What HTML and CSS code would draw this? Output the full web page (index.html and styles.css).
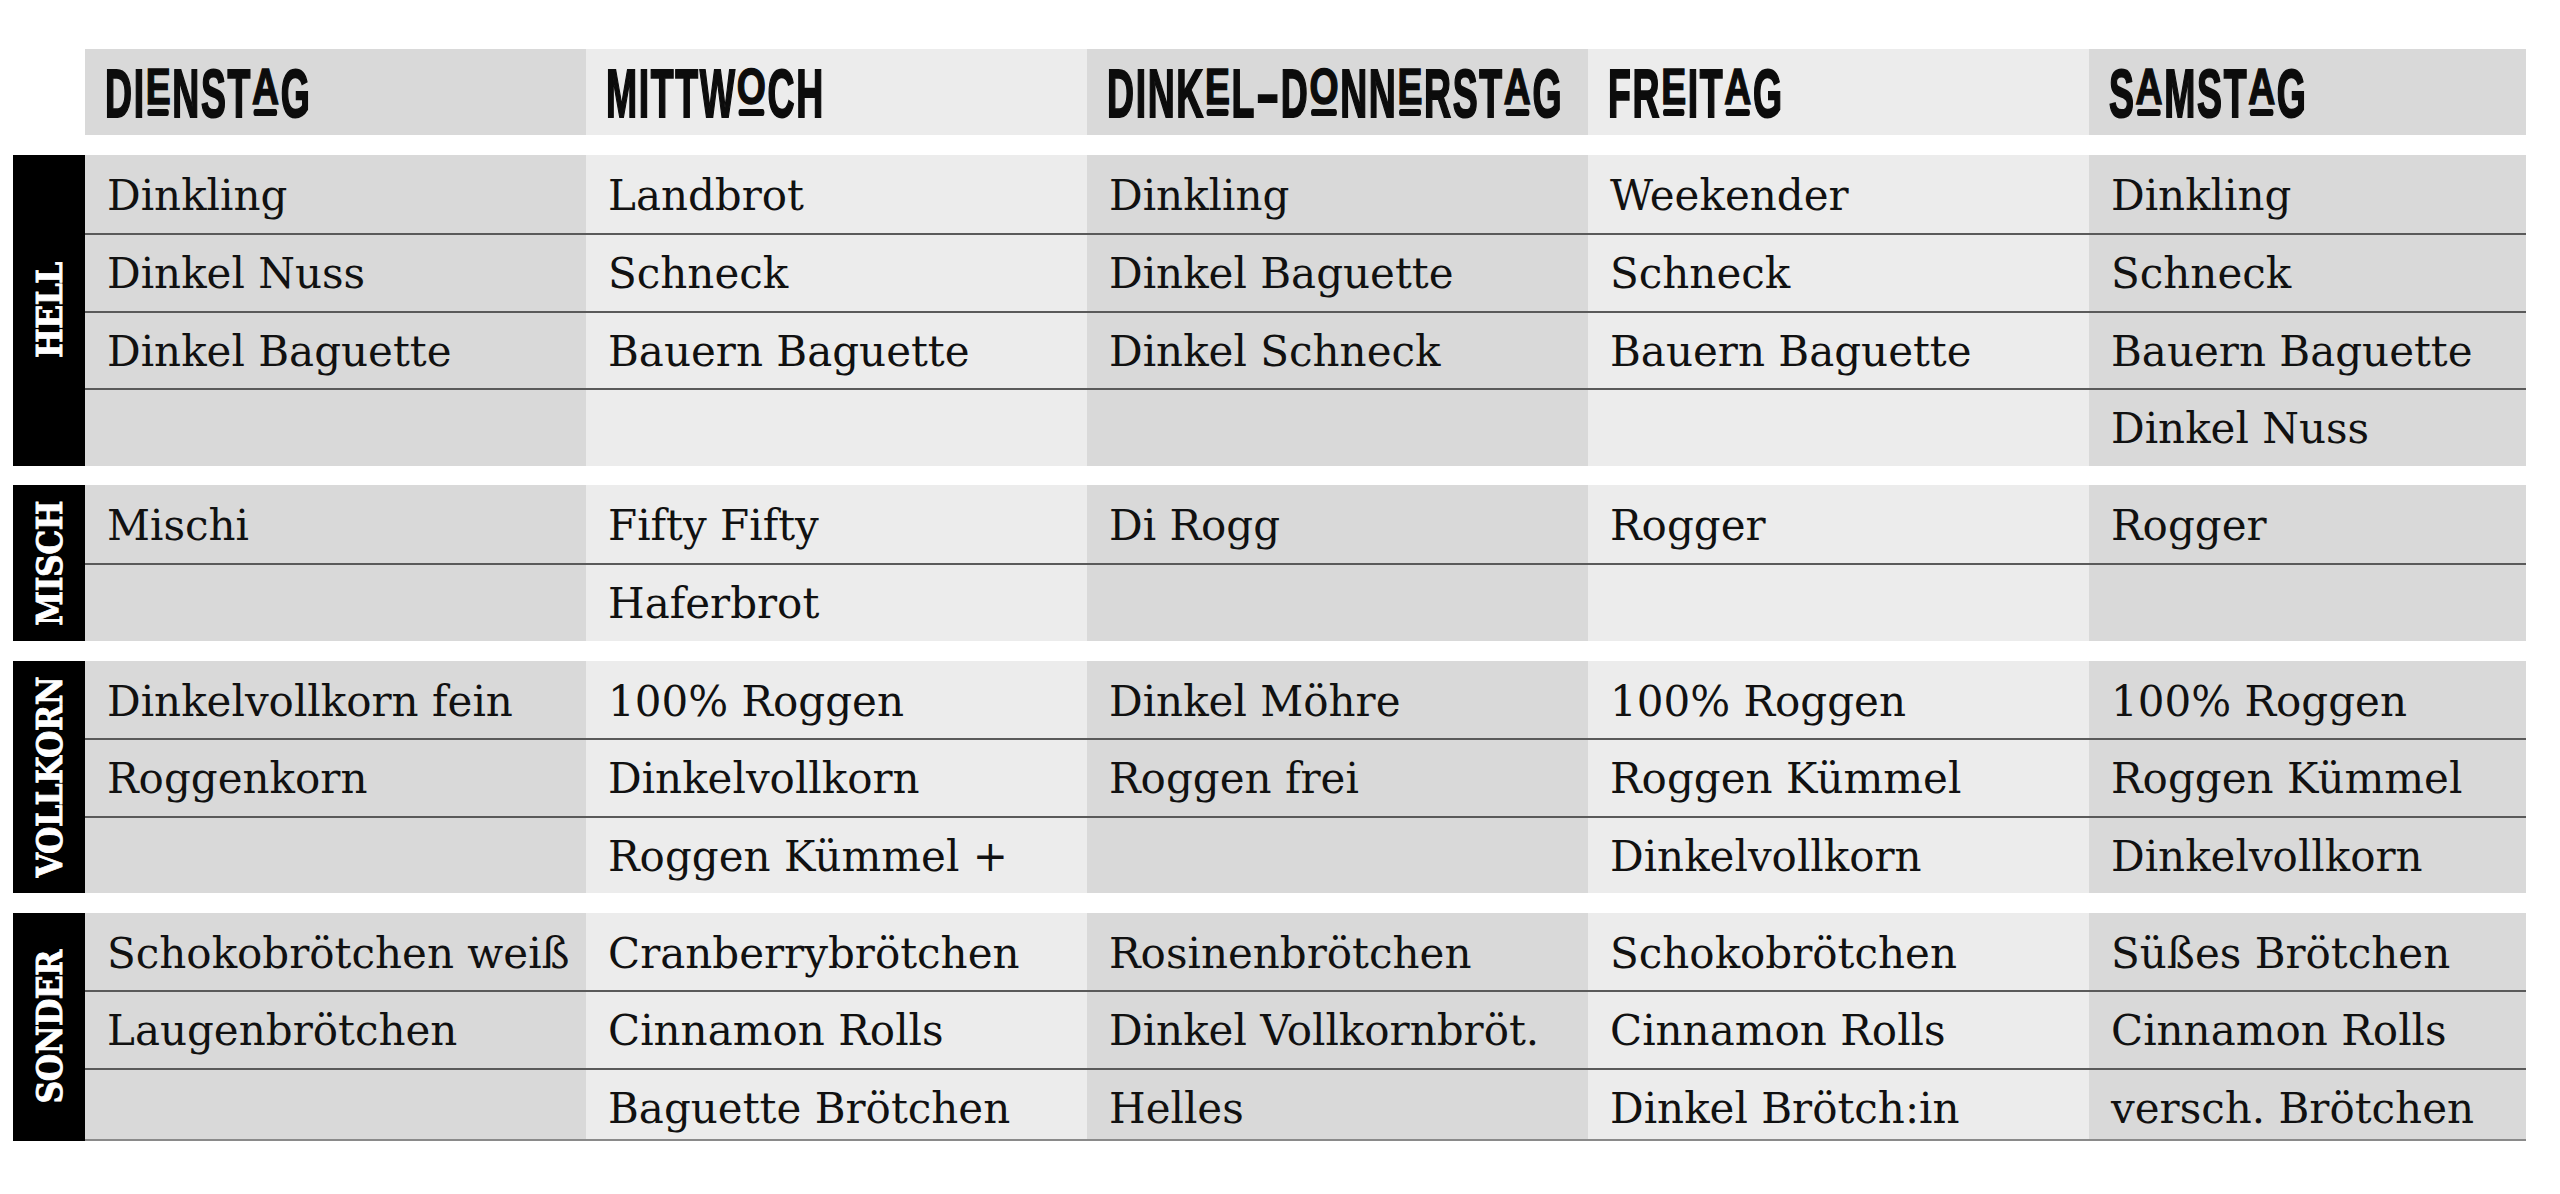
FILE: index.html
```html
<!DOCTYPE html>
<html lang="de">
<head>
<meta charset="utf-8">
<title>Brotplan</title>
<link rel="stylesheet" href="styles.css">
</head>
<body>
<div class="page">
  <div class="head">
    <div class="h"><span class="t">DI<span class="u"><span>E</span></span>NST<span class="u"><span>A</span></span>G</span></div>
    <div class="h"><span class="t">MITTW<span class="u"><span>O</span></span>CH</span></div>
    <div class="h"><span class="t">DINK<span class="u"><span>E</span></span>L<span class="dash">–</span>D<span class="u"><span>O</span></span>NN<span class="u"><span>E</span></span>RST<span class="u"><span>A</span></span>G</span></div>
    <div class="h"><span class="t">FR<span class="u"><span>E</span></span>IT<span class="u"><span>A</span></span>G</span></div>
    <div class="h"><span class="t">S<span class="u"><span>A</span></span>MST<span class="u"><span>A</span></span>G</span></div>
  </div>

  <div class="block hell">
    <div class="label"><span>HELL</span></div>
    <div class="rows">
      <div class="c">Dinkling</div><div class="c">Landbrot</div><div class="c">Dinkling</div><div class="c">Weekender</div><div class="c">Dinkling</div>
      <div class="c">Dinkel Nuss</div><div class="c">Schneck</div><div class="c">Dinkel Baguette</div><div class="c">Schneck</div><div class="c">Schneck</div>
      <div class="c">Dinkel Baguette</div><div class="c">Bauern Baguette</div><div class="c">Dinkel Schneck</div><div class="c">Bauern Baguette</div><div class="c">Bauern Baguette</div>
      <div class="c"></div><div class="c"></div><div class="c"></div><div class="c"></div><div class="c">Dinkel Nuss</div>
    </div>
  </div>

  <div class="block misch">
    <div class="label"><span>MISCH</span></div>
    <div class="rows">
      <div class="c">Mischi</div><div class="c">Fifty Fifty</div><div class="c">Di Rogg</div><div class="c">Rogger</div><div class="c">Rogger</div>
      <div class="c"></div><div class="c">Haferbrot</div><div class="c"></div><div class="c"></div><div class="c"></div>
    </div>
  </div>

  <div class="block voll">
    <div class="label"><span>VOLLKORN</span></div>
    <div class="rows">
      <div class="c">Dinkelvollkorn fein</div><div class="c">100% Roggen</div><div class="c">Dinkel Möhre</div><div class="c">100% Roggen</div><div class="c">100% Roggen</div>
      <div class="c">Roggenkorn</div><div class="c">Dinkelvollkorn</div><div class="c">Roggen frei</div><div class="c">Roggen Kümmel</div><div class="c">Roggen Kümmel</div>
      <div class="c"></div><div class="c">Roggen Kümmel +</div><div class="c"></div><div class="c">Dinkelvollkorn</div><div class="c">Dinkelvollkorn</div>
    </div>
  </div>

  <div class="block sonder">
    <div class="label"><span>SONDER</span></div>
    <div class="rows">
      <div class="c">Schokobrötchen weiß</div><div class="c">Cranberrybrötchen</div><div class="c">Rosinenbrötchen</div><div class="c">Schokobrötchen</div><div class="c">Süßes Brötchen</div>
      <div class="c">Laugenbrötchen</div><div class="c">Cinnamon Rolls</div><div class="c">Dinkel Vollkornbröt.</div><div class="c">Cinnamon Rolls</div><div class="c">Cinnamon Rolls</div>
      <div class="c"></div><div class="c">Baguette Brötchen</div><div class="c">Helles</div><div class="c">Dinkel Brötch:in</div><div class="c">versch. Brötchen</div>
    </div>
  </div>
</div>
</body>
</html>
```

FILE: styles.css
```css
* { box-sizing: border-box; }

html, body {
  margin: 0;
  padding: 0;
  background: #ffffff;
}

.page {
  padding: 49px 0 0 13px;
  width: 2560px;
}

/* header */
.head {
  display: grid;
  grid-template-columns: repeat(4, 501px) 437px;
  height: 86px;
  margin-left: 72px;
  margin-bottom: 20px;
}

.h {
  display: flex;
  align-items: center;
  padding: 1px 0 0 20px;
  overflow: hidden;
  background: #d9d9d9;
}

.h:nth-child(even) { background: #ececec; }

.h .t {
  display: inline-block;
  font-family: "Liberation Sans Narrow", "Liberation Sans", sans-serif;
  font-weight: bold;
  font-size: 68px;
  line-height: 1;
  color: #0c0c0c;
  white-space: nowrap;
  letter-spacing: 3px;
  -webkit-text-stroke: 2px #0c0c0c;
  transform: scaleX(0.55);
  transform-origin: left center;
}

.dash {
  display: inline-block;
  padding: 0 2px;
}

.u {
  display: inline-block;
  position: relative;
}

.u > span {
  display: inline-block;
  transform: scaleY(0.74);
  transform-origin: 50% 0.13em;
}

.u::after {
  content: "";
  position: absolute;
  left: 3px;
  right: 6px;
  bottom: 0.15em;
  height: 0.11em;
  border-radius: 4px;
  background: #0c0c0c;
}

/* blocks */
.block {
  display: flex;
  margin-bottom: 20px;
}

.block.hell { margin-bottom: 19px; }

.label {
  width: 72px;
  flex: none;
  background: #000;
  display: flex;
  align-items: center;
  justify-content: center;
}

.label span {
  writing-mode: vertical-rl;
  transform: rotate(180deg);
  color: #fff;
  font-family: "DejaVu Serif Condensed", "DejaVu Serif", serif;
  font-weight: bold;
  font-size: 35px;
  line-height: 1;
  letter-spacing: -0.5px;
  -webkit-text-stroke: 0.8px #fff;
}

.rows {
  display: grid;
  grid-template-columns: repeat(4, 501px) 437px;
  grid-auto-rows: 77.75px;
}

.misch .rows { grid-auto-rows: 78px; }
.voll .rows { grid-auto-rows: 77.33px; }
.sonder .rows { grid-template-rows: 77px 78px 73px; }

.c {
  padding: 17px 0 0 22px;
  font-family: "DejaVu Serif", serif;
  font-size: 42px;
  line-height: 48px;
  color: #111;
  white-space: nowrap;
  overflow: hidden;
  background: #ececec;
}

.c:nth-child(5n+1),
.c:nth-child(5n+3),
.c:nth-child(5n+5) {
  background: #d9d9d9;
}

.c:nth-child(n+6) {
  border-top: 2px solid #5a5a5a;
  padding-top: 15px;
}

.sonder .c:nth-child(n+11) {
  border-bottom: 2px solid #8a8a8a;
}
```
